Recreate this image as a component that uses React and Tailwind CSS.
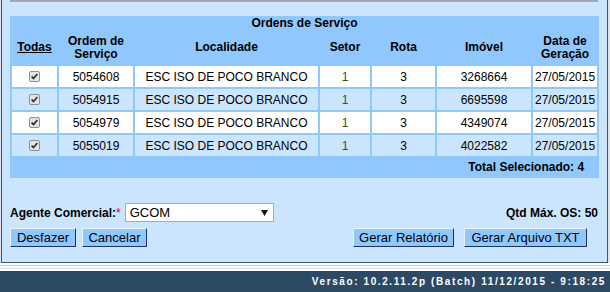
import React from "react";

const rows = [
  { os: "5054608", imovel: "3268664", bg: "bg-white" },
  { os: "5054915", imovel: "6695598", bg: "bg-[#cbe5fe]" },
  { os: "5054979", imovel: "4349074", bg: "bg-white" },
  { os: "5055019", imovel: "4022582", bg: "bg-[#cbe5fe]" },
];

const CheckBox = () => (
  <svg width="11" height="11" viewBox="0 0 11 11" className="inline-block">
    <rect x="0.5" y="0.5" width="10" height="10" rx="1.5" fill="#e4e4e4" stroke="#8e8f8f" />
    <path d="M2.6 5.6 L4.5 7.6 L8.4 3" fill="none" stroke="#2b2b2b" strokeWidth="1.6" />
  </svg>
);

const Botao = ({ children, className }) => (
  <button
    type="button"
    className={`h-[19px] bg-[#90c7fc] border border-t-[#e8f3ff] border-l-[#e8f3ff] border-r-[#1c3559] border-b-[#1c3559] text-[13px] leading-none text-black ${className}`}
  >
    {children}
  </button>
);

const App = () => {
  return (
    <div className="w-[610px] h-[292px] overflow-hidden bg-[#dde3ea] font-['Liberation_Sans',Arial,sans-serif] text-black">
      {/* Painel */}
      <div className="ml-[1px] w-[607px] bg-[#cbe5fe] border-l border-r border-b border-[#3a5773] pl-[8px] pb-[15px]">
        <div className="h-[2px] w-[588px] bg-[#a3a8ad]"></div>

        <table className="mt-[14px] w-[589px] table-fixed border-separate border-spacing-[2px] bg-[#90c7fc] text-[12px]">
          <colgroup>
            <col className="w-[45px]" />
            <col className="w-[74px]" />
            <col className="w-[183px]" />
            <col className="w-[50px]" />
            <col className="w-[63px]" />
            <col className="w-[94px]" />
            <col className="w-[64px]" />
          </colgroup>
          <tbody>
            <tr>
              <td colSpan={7} className="h-[11px] p-0 text-center font-bold leading-[11px]">
                Ordens de Serviço
              </td>
            </tr>
            <tr className="font-bold leading-[13px]">
              <td className="h-[33px] p-0 text-center">
                <span className="underline">Todas</span>
              </td>
              <td className="p-0 text-center">Ordem de Serviço</td>
              <td className="p-0 text-center">Localidade</td>
              <td className="p-0 text-center">Setor</td>
              <td className="p-0 text-center">Rota</td>
              <td className="p-0 text-center">Imóvel</td>
              <td className="p-0 text-center">Data de Geração</td>
            </tr>
            {rows.map((r) => (
              <tr key={r.os} className="leading-[14px]">
                <td className={`h-[21px] p-0 text-center ${r.bg}`}>
                  <span className="flex justify-center">
                    <CheckBox />
                  </span>
                </td>
                <td className={`p-0 text-center ${r.bg}`}>{r.os}</td>
                <td className={`p-0 text-center ${r.bg}`}>ESC ISO DE POCO BRANCO</td>
                <td className={`p-0 text-center text-[#1f5f1f] ${r.bg}`}>1</td>
                <td className={`p-0 text-center ${r.bg}`}>3</td>
                <td className={`p-0 text-center ${r.bg}`}>{r.imovel}</td>
                <td className={`p-0 text-center ${r.bg}`}>27/05/2015</td>
              </tr>
            ))}
            <tr>
              <td colSpan={7} className="h-[18px] p-0 pr-[13px] text-right font-bold leading-[14px]">
                Total Selecionado: 4
              </td>
            </tr>
          </tbody>
        </table>

        {/* Agente */}
        <div className="mt-[25px] w-[589px] h-[19px] flex items-center justify-between text-[12px]">
          <div className="flex items-center">
            <span className="font-bold">Agente Comercial:</span>
            <span className="text-[#d40000]">*</span>
            <div className="ml-[4px] w-[149px] h-[19px] bg-white border border-[#a5acb2] flex items-center justify-between pl-[4px] pr-[5px]">
              <span className="text-[13px] leading-none">GCOM</span>
              <svg width="7" height="6" viewBox="0 0 7 6">
                <path d="M0 0 H7 L3.5 6 Z" fill="#111" />
              </svg>
            </div>
          </div>
          <span className="font-bold pr-[1px]">Qtd Máx. OS: 50</span>
        </div>

        {/* Botoes */}
        <div className="mt-[6px] w-[589px] flex items-center">
          <Botao className="w-[66px]">Desfazer</Botao>
          <Botao className="ml-[6px] w-[65px]">Cancelar</Botao>
          <Botao className="ml-auto w-[101px]">Gerar Relatório</Botao>
          <Botao className="ml-[10px] mr-[12px] w-[123px]">Gerar Arquivo TXT</Botao>
        </div>
      </div>

      {/* Faixas */}
      <div className="h-[2px] bg-white"></div>
      <div className="h-[1px] bg-[#c9d3dd]"></div>
      <div className="h-[2px] bg-white"></div>
      <div className="h-[1px] bg-[#d5dde5]"></div>
      <div className="h-[2px] bg-white"></div>

      {/* Rodape */}
      <div className="h-[22px] bg-[#2d4963] flex items-center justify-end pr-[4px]">
        <span className="text-white font-bold text-[10px] tracking-[1.6px] leading-none">
          Versão: 10.2.11.2p (Batch) 11/12/2015 - 9:18:25
        </span>
      </div>
    </div>
  );
};

export default App;
